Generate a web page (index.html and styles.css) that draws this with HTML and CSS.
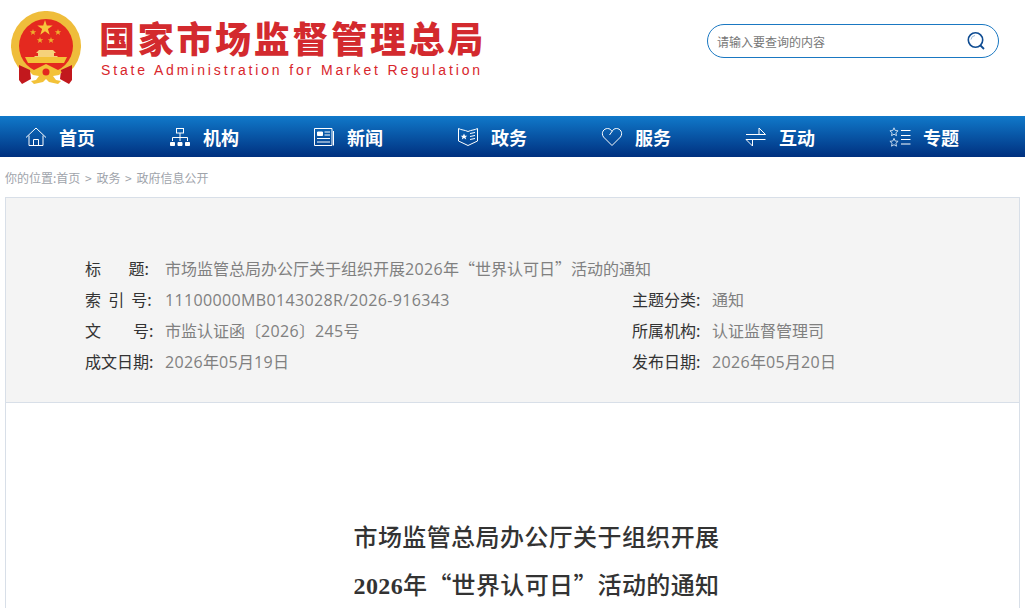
FILE: index.html
```html
<!DOCTYPE html>
<html lang="zh-CN">

<head>
    <meta charset="utf-8">
    <title>市场监管总局办公厅关于组织开展2026年“世界认可日”活动的通知</title>
    <link rel="stylesheet" href="styles.css">
</head>

<body>
    <header class="top">
        <div class="logo">
            <svg class="emblem" width="70" height="74" viewBox="11 11 70 74">
                <path fill="#efbd3b" d="M22.600 72A35 35 0 1 1 69.400 72Z" />
                <circle cx="46" cy="46" r="27" fill="#e4291f" />
                <path fill="#c2181d" d="M19 65L30 70 31 79 22 84 19 80Z" />
                <path fill="#c2181d" d="M72 65L61 70 60 79 69 84 72 80Z" />
                <path fill="#f7c63c" d="M45 20l1.800 5.600h5.900l-4.800 3.500 1.800 5.700-4.700-3.500-4.700 3.500 1.800-5.700-4.800-3.500h5.900z" />
                <path fill="#eeb02e" d="M33 29l.8 2.200h2.400l-1.900 1.500.7 2.300-2-1.400-2 1.400.7-2.300-1.900-1.500h2.400z" />
                <path fill="#eeb02e" d="M58 29l.8 2.200h2.400l-1.900 1.500.7 2.300-2-1.400-2 1.400.7-2.300-1.900-1.500h2.400z" />
                <path fill="#eeb02e" d="M40 37l.8 2.200h2.400l-1.900 1.500.7 2.300-2-1.400-2 1.400.7-2.300-1.900-1.500h2.400z" />
                <path fill="#eeb02e" d="M51 37l.8 2.200h2.400l-1.900 1.500.7 2.300-2-1.400-2 1.400.7-2.300-1.900-1.500h2.400z" />
                <path fill="#f6d27a" d="M39 50h14l3 3h-2v3h3l1 1H34l1-1h3v-3h-2z" />
                <path fill="#f3c238" d="M25 57h42l-3 6H28z" />
                <path fill="#e4291f" d="M30 63h32l-6 6H36z" />
                <path fill="#f3c238" d="M30 72l8-4 8-4 8 4 8 4-3 3-6 1 3 4 5 1-3 3-9-2-3-3-3 3-9 2-3-3 5-1 3-4-6-1z" />
                <circle cx="46" cy="72" r="3.500" fill="#e4291f" />
            </svg>
            <div class="logo-text">
                <div class="logo-cn">国家市场监督管理总局</div>
                <div class="logo-en">State Administration for Market Regulation</div>
            </div>
        </div>
        <div class="search-box">
            <span class="search-hint">请输入要查询的内容</span>
            <svg class="search-icon" width="20" height="20" viewBox="0 0 20 20" fill="none">
                <circle cx="9.500" cy="9" r="7.200" stroke="#0f4c92" stroke-width="1.600" />
                <path d="M5 8.500a4.500 4.500 0 0 1 4-4" stroke="#9db9d8" stroke-width="1" />
                <path d="M14.500 14.500l3.500 3.500" stroke="#0f4c92" stroke-width="1.800" />
            </svg>
        </div>
    </header>

    <nav class="navbar">
        <a class="nav-item">
            <svg width="22" height="20" viewBox="0 0 22 20" fill="none" stroke="#fff">
                <path d="M1 10.500L11 1l10 9.500" />
                <path d="M4 8.500V18.500H18V8.500" />
                <path d="M8.500 18.500V12.500H13.500V18.500" />
            </svg>
            <span>首页</span>
        </a>
        <a class="nav-item">
            <svg width="22" height="20" viewBox="0 0 22 20" fill="none" stroke="#fff">
                <rect x="7.500" y="1.500" width="7" height="4.500" />
                <path d="M11 6v5M3.500 14V10.500H18.500V14M11 10.500V14" />
                <path fill="#fff" d="M1.500 15.500h4v3h-4zM9 15.500h4v3H9zM16.500 15.500h4v3h-4z" />
            </svg>
            <span>机构</span>
        </a>
        <a class="nav-item">
            <svg width="22" height="20" viewBox="0 0 22 20" fill="none" stroke="#fff">
                <path d="M1.500 1.500H19V18.500H1.500z" />
                <path d="M20.500 4V18.500" />
                <path fill="#fff" d="M4.500 5h5v3.500h-5z" />
                <path d="M11.500 5H17M11.500 8H17M4 11.500H17M4 15H17" />
            </svg>
            <span>新闻</span>
        </a>
        <a class="nav-item">
            <svg width="22" height="20" viewBox="0 0 22 20" fill="none" stroke="#fff">
                <path d="M1.500 1.500C4 3 8 3 11 4.500C14 3 18 3 20.500 1.500V14L11 18.500L1.500 14z" />
                <path fill="#fff" stroke="none" d="M7 6.500l1 2.300h2.300l-1.800 1.400.7 2.300-2.200-1.400-2.200 1.400.7-2.300-1.800-1.400H6z" />
                <path d="M13 6.500l5-1M13 9.500l5-1M13 12.500l5-1" />
            </svg>
            <span>政务</span>
        </a>
        <a class="nav-item">
            <svg width="22" height="20" viewBox="0 0 22 20" fill="none" stroke="#fff">
                <path d="M11 18.500L2.500 10C-.500 5.500 3 1.500 6.500 1.500C8.500 1.500 10 2.500 11 4.500L8.500 8" />
                <path d="M11 4.500C12 2.500 13.500 1.500 15.500 1.500C19 1.500 22.500 5.500 19.500 10L11 18.500" />
            </svg>
            <span>服务</span>
        </a>
        <a class="nav-item">
            <svg width="22" height="20" viewBox="0 0 22 20" fill="none" stroke="#fff">
                <path d="M1 7.500H20.500L14 1V7" />
                <path d="M20.500 12.500H1L7.500 19V13" />
            </svg>
            <span>互动</span>
        </a>
        <a class="nav-item">
            <svg width="22" height="20" viewBox="0 0 22 20" fill="none" stroke="#c4d8ee">
                <path d="M5 .800l1.200 2.700 2.900.3-2.200 2 .6 2.900L5 7.200 2.500 8.700l.6-2.900-2.200-2 2.900-.3z" />
                <path d="M5 11.300l1.200 2.700 2.900.3-2.200 2 .6 2.900L5 17.700l-2.500 1.500.6-2.900-2.200-2 2.900-.3z" />
                <path stroke="#fff" d="M12 3.500h9.500M12 8.500h9.500M12 12.500h9.500M12 17h9.500" />
            </svg>
            <span>专题</span>
        </a>
    </nav>

    <div class="crumbs">你的位置:首页 <i>&gt;</i> 政务 <i>&gt;</i> 政府信息公开</div>

    <div class="content">
        <div class="info">
            <div class="info-row">
                <span class="info-label">标&emsp;&ensp;&nbsp;题:</span>
                <span class="info-value">市场监管总局办公厅关于组织开展<span class="num">2026</span>年“世界认可日”活动的通知</span>
            </div>
            <div class="info-row">
                <div class="info-cell">
                    <span class="info-label">索&nbsp;&nbsp;引&nbsp;&nbsp;号:</span>
                    <span class="info-value"><span class="num">11100000MB0143028R/2026-916343</span></span>
                </div>
                <div class="info-cell">
                    <span class="info-label">主题分类:</span>
                    <span class="info-value">通知</span>
                </div>
            </div>
            <div class="info-row">
                <div class="info-cell">
                    <span class="info-label">文&emsp;&emsp;号:</span>
                    <span class="info-value">市监认证函〔<span class="num">2026</span>〕<span class="num">245</span>号</span>
                </div>
                <div class="info-cell">
                    <span class="info-label">所属机构:</span>
                    <span class="info-value">认证监督管理司</span>
                </div>
            </div>
            <div class="info-row">
                <div class="info-cell">
                    <span class="info-label">成文日期:</span>
                    <span class="info-value"><span class="num">2026</span>年<span class="num">05</span>月<span class="num">19</span>日</span>
                </div>
                <div class="info-cell">
                    <span class="info-label">发布日期:</span>
                    <span class="info-value"><span class="num">2026</span>年<span class="num">05</span>月<span class="num">20</span>日</span>
                </div>
            </div>
        </div>
        <div class="article">
            <h1 class="article-title">市场监管总局办公厅关于组织开展<br><b class="title-num">2026</b>年<span class="title-quote">“</span>世界认可日<span class="title-quote">”</span>活动的通知</h1>
        </div>
    </div>
</body>

</html>
```

FILE: styles.css
```css
html,
body {
    height: 608px;
    overflow: hidden;
}

body {
    margin: 0;
    padding: 0;
    background-color: #ffffff;
    font-family: "Noto Sans CJK SC", "Liberation Sans", sans-serif;
}

.top {
    display: flex;
    justify-content: space-between;
    height: 116px;
    padding: 11px 26px 0 11px;
    box-sizing: border-box;
}

.logo {
    display: flex;
    align-items: flex-start;
}

.emblem {
    margin-right: 18px;
}

.logo-text {
    padding-top: 4px;
}

.logo-cn {
    font-size: 36px;
    line-height: 45px;
    font-weight: 900;
    letter-spacing: 2.700px;
    color: #d32a2e;
    white-space: nowrap;
}

.logo-en {
    font-family: "Liberation Sans", sans-serif;
    font-size: 14px;
    line-height: 20px;
    letter-spacing: 2.850px;
    color: #d8262c;
    margin-left: 2px;
    white-space: nowrap;
}

.search-box {
    display: flex;
    align-items: center;
    justify-content: space-between;
    width: 292px;
    height: 34px;
    margin-top: 13px;
    padding: 0 12px 0 9px;
    box-sizing: border-box;
    border: 1px solid #1a78c2;
    border-radius: 17px;
}

.search-hint {
    font-size: 12px;
    color: #777777;
}

.navbar {
    display: flex;
    height: 41px;
    padding-left: 25px;
    background: linear-gradient(to bottom, #1079ca, #00307f);
}

.nav-item {
    display: flex;
    flex: none;
    align-items: center;
    width: 144px;
    color: #ffffff;
    font-size: 18px;
    font-weight: 700;
}

.nav-item:last-child {
    width: auto;
}

.nav-item svg {
    margin-right: 12px;
}

.crumbs {
    height: 40px;
    padding-left: 5px;
    box-sizing: border-box;
    font-size: 12px;
    line-height: 42px;
    color: #a0a4ab;
}

.crumbs i {
    font-style: normal;
    margin: 0 2px;
}

.content {
    margin: 0 5px;
    border: 1px solid #d8dfe8;
    border-bottom: none;
}

.info {
    height: 205px;
    padding: 55px 0 0 79px;
    box-sizing: border-box;
    background-color: #f4f4f4;
    border-bottom: 1px solid #d8dfe8;
}

.info-row {
    display: flex;
    height: 31px;
    font-size: 16px;
    line-height: 31px;
}

.info-cell {
    display: flex;
    flex: none;
    width: 547px;
}

.info-cell:last-child {
    width: auto;
}

.info-label {
    display: inline-block;
    flex: none;
    width: 80px;
    color: #333333;
    white-space: nowrap;
}

.info-value {
    color: #808080;
    white-space: nowrap;
}

.num {
    font-family: "Open Sans", sans-serif;
    letter-spacing: 0.350px;
}

.article {
    padding: 109px 0 0 48px;
}

.article-title {
    margin: 0;
    font-family: "Noto Sans CJK SC", "Liberation Serif", serif;
    font-size: 24px;
    line-height: 48px;
    font-weight: 500;
    letter-spacing: 0.400px;
    text-align: center;
    color: #333333;
}

.title-num {
    font-family: "Liberation Serif", serif;
    font-weight: 700;
}

.title-quote {
    display: inline-block;
    width: 24px;
    text-align: center;
}
```
